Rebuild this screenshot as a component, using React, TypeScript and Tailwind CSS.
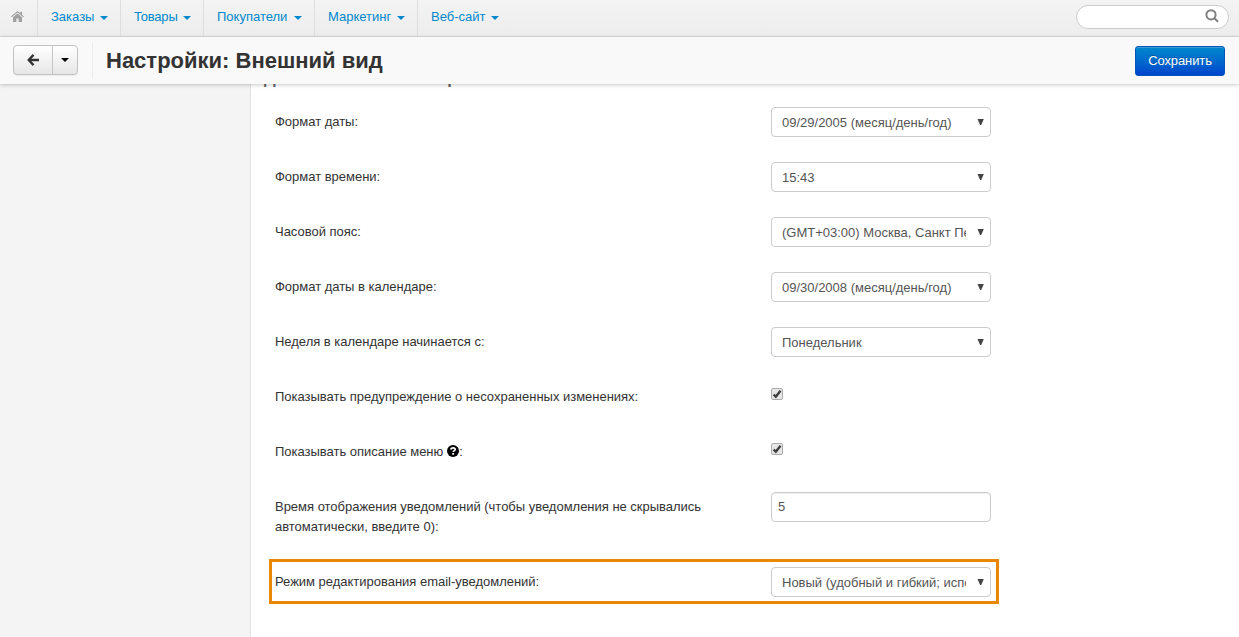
import React from "react";

const NAV = [
  { label: "Заказы", width: "w-[83px]", text: "w-[49px]" },
  { label: "Товары", width: "w-[83px]", text: "w-[49px] tracking-[-0.2px]" },
  { label: "Покупатели", width: "w-[111px]", text: "w-[77px]" },
  { label: "Маркетинг", width: "w-[103px]", text: "w-[69px]" },
  { label: "Веб-сайт", width: "w-[100px]", text: "w-[60px]" },
];

function Caret({ className = "" }: { className?: string }) {
  return (
    <svg className={className} width="8" height="4" viewBox="0 0 8 4">
      <path d="M0 0h8L4 4z" fill="currentColor" />
    </svg>
  );
}

function Select({ value }: { value: string }) {
  return (
    <div className="flex h-[30px] w-[220px] items-center rounded-[4px] border border-[#ccc] bg-white pl-[10px] text-[#555]">
      <span className="w-[184px] overflow-hidden pt-px whitespace-nowrap">{value}</span>
      <svg className="mb-px ml-[11px] shrink-0" width="7" height="6" viewBox="0 0 7 6">
        <path d="M.5 0h6.300L4.200 6H3.100z" fill="#444" />
      </svg>
    </div>
  );
}

function Checkbox() {
  return (
    <svg className="mt-[6px] block" width="13" height="13" viewBox="0 0 13 13">
      <rect x=".5" y=".5" width="11" height="11" rx="1.5" fill="#e6e6e6" stroke="#aaa" />
      <path d="M2.600 6.500 4.800 8.700 9.500 2.700" fill="none" stroke="#3b3b3b" strokeWidth="2.3" />
    </svg>
  );
}

function Help() {
  return (
    <svg className="ml-[4px] inline-block align-[-1px]" width="12" height="12" viewBox="0 0 12 12">
      <circle cx="6" cy="6" r="6" fill="#000" />
      <path d="M3.9 4.6C4 3.3 4.9 2.8 6 2.8c1.200 0 2.200.6 2.200 1.700C8.200 5.700 6.200 5.600 6.200 7.100" fill="none" stroke="#fff" strokeWidth="1.700" />
      <path d="M5.200 8h1.900v1.700H5.200z" fill="#fff" />
    </svg>
  );
}

function Row({ label, children }: { label: React.ReactNode; children: React.ReactNode }) {
  return (
    <div className="flex min-h-[30px] items-start">
      <div className="w-[496px] pt-[5px] pr-12 leading-5 tracking-[-0.015px]">{label}</div>
      {children}
    </div>
  );
}

export default function App() {
  return (
    <div className="flex h-[637px] w-full flex-col overflow-hidden bg-white font-['Liberation_Sans',Arial,sans-serif] text-[13px] text-[#333]">
      <nav className="flex h-[37px] shrink-0 border-b border-[#d9d9d9] bg-linear-to-b from-[#f3f3f3] to-[#ededed]">
        <a className="flex h-9 w-[38px] items-start justify-center border-r border-[#dedede] pt-[11px] pr-[2px]">
          <svg width="13" height="11" viewBox="0 0 13 11" fill="#a0a0a0">
            <path d="M6.500 0 0 5.400l.8.900 5.700-4.700 5.700 4.700.8-.900-2-1.700V.700H9.200v1.500z" />
            <path d="M6.500 2.600 2 6.300V11h3.400V7.500h2.200V11H11V6.300z" />
          </svg>
        </a>
        {NAV.map((n, i) => (
          <a
            key={n.label}
            className={`flex h-9 items-start pt-[7px] pl-[13px] leading-5 text-[#0088cc] ${n.width} ${i < 4 ? "border-r border-[#dedede]" : ""}`}
          >
            <span className={n.text}>{n.label}</span>
            <Caret className="mt-[9px]" />
          </a>
        ))}
        <div className="mt-[5px] mr-[10px] ml-auto flex h-6 w-[153px] justify-end rounded-full border border-[#ccc] bg-white pt-[3px] pr-[9px]">
          <svg width="14" height="14" viewBox="0 0 14 14" fill="none" stroke="#808080" strokeWidth="2">
            <circle cx="6" cy="5.800" r="4.600" />
            <path d="m9.400 9.200 3.600 3.600" />
          </svg>
        </div>
      </nav>
      <header className="z-10 flex h-[47px] shrink-0 items-start bg-[#f9f9f9] shadow-[0_1px_4px_rgba(0,0,0,0.22)]">
        <div className="mt-2 ml-[13px] flex h-[30px] w-[65px] rounded-[4px] border border-[#c2c2c2] bg-linear-to-b from-white to-[#e6e6e6] shadow-[0_1px_1px_rgba(0,0,0,0.06)]">
          <div className="flex w-[39px] items-center justify-center border-r border-[#c5c5c5]">
            <svg width="12" height="12" viewBox="0 0 12 12" fill="none" stroke="#333" strokeWidth="2.300">
              <path d="M6.500.900 1.700 6l4.800 5.100M2 6h10" />
            </svg>
          </div>
          <div className="flex flex-1 items-center justify-center text-black">
            <Caret />
          </div>
        </div>
        <div className="mt-[6px] ml-[14px] h-9 w-px bg-[#ededed]" />
        <h1 className="ml-[13px] pt-[9px] text-[22px] leading-[30px] font-bold whitespace-nowrap">Настройки: Внешний вид</h1>
        <button className="mt-[9px] mr-[14px] ml-auto h-[30px] w-[90px] rounded-[3px] border border-[#0055bb] bg-linear-to-b from-[#0088cc] to-[#0044cc] tracking-[-0.1px] text-white shadow-[inset_0_1px_0_rgba(255,255,255,0.2)] [text-shadow:0_-1px_0_rgba(0,0,0,0.25)]">
          Сохранить
        </button>
      </header>
      <div className="flex min-h-0 flex-1">
        <aside className="w-[251px] shrink-0 border-r border-[#e3e3e3] bg-[#f4f4f4]" />
        <main className="min-w-0 flex-1 overflow-hidden">
          <h4 className="-mt-[16px] ml-[13px] h-[39px] text-[16.4px] leading-5 font-bold whitespace-nowrap text-[#666]">Дополнительные настройки</h4>
          <div className="flex flex-col gap-[25px] pl-6">
            <Row label="Формат даты:"><Select value="09/29/2005 (месяц/день/год)" /></Row>
            <Row label="Формат времени:"><Select value="15:43" /></Row>
            <Row label="Часовой пояс:"><Select value="(GMT+03:00) Москва, Санкт Петербург" /></Row>
            <Row label="Формат даты в календаре:"><Select value="09/30/2008 (месяц/день/год)" /></Row>
            <Row label="Неделя в календаре начинается с:"><Select value="Понедельник" /></Row>
            <Row label="Показывать предупреждение о несохраненных изменениях:"><Checkbox /></Row>
            <Row label={<>Показывать описание меню<Help />:</>}><Checkbox /></Row>
            <Row label="Время отображения уведомлений (чтобы уведомления не скрывались автоматически, введите 0):">
              <div className="h-[30px] w-[220px] rounded-[4px] border border-[#ccc] px-[6px] leading-7 text-[#555] shadow-[inset_0_1px_1px_rgba(0,0,0,0.075)]">5</div>
            </Row>
          </div>
          <div className="mt-[22px] ml-[18px] h-[45px] w-[730px] border-[3px] border-[#e88700] pt-[5px] pl-[3px]">
            <Row label="Режим редактирования email-уведомлений:"><Select value="Новый (удобный и гибкий; используется по умолчанию)" /></Row>
          </div>
        </main>
      </div>
    </div>
  );
}
